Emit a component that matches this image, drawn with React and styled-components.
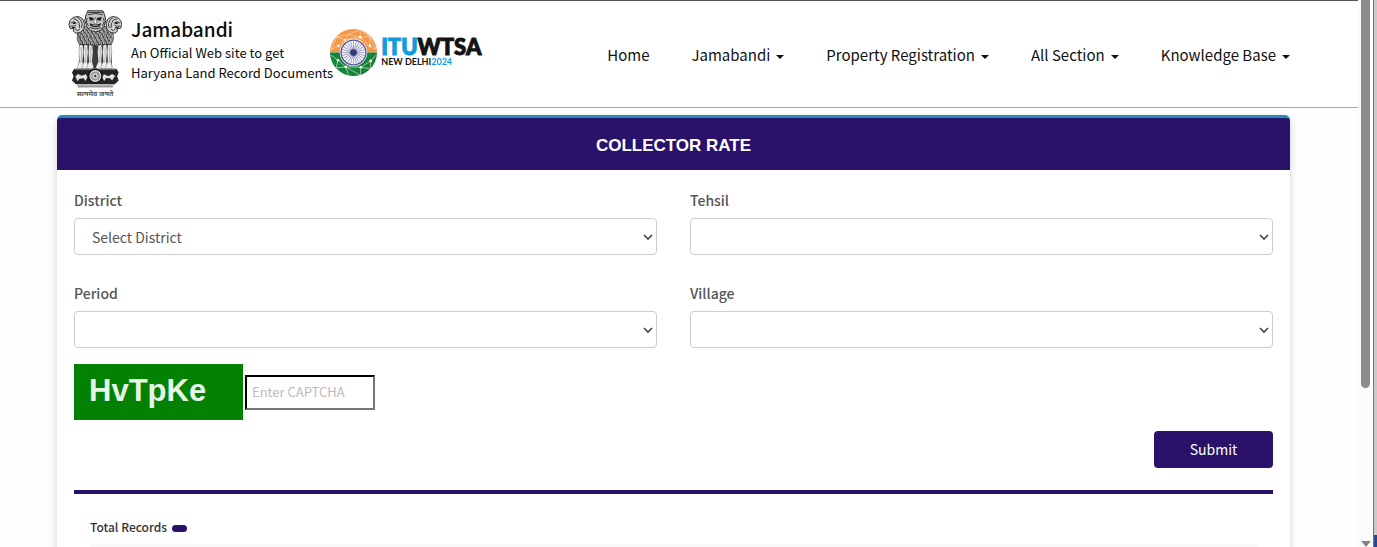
import React from "react";
import styled, { createGlobalStyle } from "styled-components";

const sans = `"Noto Sans CJK SC", "Noto Sans", sans-serif`;
const indigo = "#2a126b";

const GlobalStyle = createGlobalStyle`
  *, *::before, *::after { box-sizing: border-box; }
  body { margin: 0; background: #fefefe; color: #111; font-family: ${sans}; }
`;

const Shell = styled.div`
  display: flex;
  height: 100vh;
  overflow: hidden;
`;

const Page = styled.div`
  flex: 1;
  min-width: 0;
  overflow: hidden;
`;

const Header = styled.header`
  display: flex;
  align-items: center;
  height: 108px;
  padding: 0 68px;
  border-top: 1px solid #55585d;
  border-bottom: 1px solid #86aed6;
  background: #fff;
`;

const Brand = styled.a`
  display: flex;
  align-items: center;
  gap: 9px;
  color: #0c0c0c;
  text-decoration: none;
`;

const EmblemFigure = styled.span`
  display: flex;
  flex-direction: column;
  align-items: center;
  width: 54px;
`;

const Motto = styled.span`
  font: bold 7px/8px "Noto Sans", sans-serif;
  color: #555;
  white-space: nowrap;
`;

const BrandText = styled.span`
  display: flex;
  flex-direction: column;
  padding-bottom: 10px;
  font-size: 13px;
  line-height: 20px;
  white-space: nowrap;
`;

const BrandName = styled.strong`
  font-size: 19px;
  line-height: 28px;
  font-weight: 500;
`;

const EventLink = styled.a`
  display: flex;
  align-items: center;
  gap: 4px;
  margin-left: -3px;
  padding-bottom: 4px;
  color: #141414;
  text-decoration: none;
`;

const EventText = styled.span`
  display: flex;
  flex-direction: column;
  font-family: Lato, sans-serif;
  white-space: nowrap;
`;

const EventTitle = styled.span`
  font-size: 22px;
  line-height: 20px;
  font-weight: 900;
  -webkit-text-stroke: 1px currentColor;
`;

const EventPlace = styled.span`
  font-size: 9px;
  line-height: 10px;
  font-weight: 700;
`;

const Accent = styled.span`
  color: #0f9bdc;
`;

const Nav = styled.nav`
  display: flex;
  gap: 42px;
  margin-left: auto;
  padding-top: 2px;
`;

const NavLink = styled.a`
  display: flex;
  align-items: center;
  gap: 6px;
  color: #111;
  font-size: 15px;
  line-height: 22px;
  text-decoration: none;
  white-space: nowrap;
`;

const Caret = styled.span`
  margin-top: 4px;
  border: 4px solid transparent;
  border-top-color: #111;
  border-bottom: 0;
`;

const Card = styled.main`
  margin: 7px 68px 0 57px;
  min-height: 480px;
  border-radius: 5px;
  background: #fff;
  box-shadow: 0 4px 8px rgba(0, 0, 0, 0.18);
`;

const CardTitle = styled.h1`
  margin: 0;
  padding-top: 4px;
  border-top: 3px solid #2a8ab6;
  border-radius: 5px 5px 0 0;
  background: ${indigo};
  color: #fff;
  font: bold 17px/48px "Liberation Sans", Arial, sans-serif;
  text-align: center;
`;

const Form = styled.form`
  padding: 20px 17px 0;
`;

const Fields = styled.div`
  display: grid;
  grid-template-columns: 1fr 1fr;
  gap: 28px 33px;
`;

const Field = styled.div`
  display: flex;
  flex-direction: column;
  gap: 8px;
`;

const Label = styled.label`
  color: #555;
  font-size: 14px;
  line-height: 20px;
  font-weight: 500;
`;

const SelectBox = styled.div`
  display: grid;
  align-items: center;
  & > * { grid-area: 1 / 1; }
  & > svg { justify-self: end; margin-right: 4px; pointer-events: none; }
`;

const Select = styled.select`
  appearance: none;
  width: 100%;
  height: 37px;
  padding: 0 17px;
  border: 1px solid #ccc;
  border-radius: 4px;
  background: #fff;
  color: #555;
  font: 14px/20px ${sans};
`;

const CaptchaRow = styled.div`
  display: flex;
  align-items: center;
  gap: 2px;
  margin-top: 16px;
`;

const Captcha = styled.div`
  width: 169px;
  height: 56px;
  padding-left: 15px;
  background: #028102;
  color: #e6f5e6;
  font: bold 31px/53px "Liberation Sans", Arial, sans-serif;
`;

const CaptchaInput = styled.input`
  width: 130px;
  height: 35px;
  padding: 0 5px 2px;
  border: 2px inset #767676;
  border-color: #222 #767676 #767676 #222;
  background: #fff;
  color: #333;
  font: 13px/20px ${sans};
  &::placeholder { color: #bbb; opacity: 1; }
`;

const Actions = styled.div`
  display: flex;
  justify-content: flex-end;
  margin-top: 11px;
  padding-bottom: 22px;
  border-bottom: 4px solid ${indigo};
`;

const SubmitButton = styled.button`
  width: 119px;
  height: 37px;
  padding: 0 0 2px;
  border: 0;
  border-radius: 4px;
  background: ${indigo};
  color: #fff;
  font: 14px/20px ${sans};
`;

const Results = styled.section`
  padding: 23px 33px 0;
`;

const Total = styled.div`
  display: flex;
  align-items: center;
  gap: 5px;
  color: #333;
  font-size: 12px;
  line-height: 20px;
  font-weight: 500;
`;

const Badge = styled.span`
  width: 15px;
  height: 7px;
  margin-top: 3px;
  border-radius: 4px;
  background: ${indigo};
`;

const ResultsHead = styled.div`
  height: 30px;
  margin-top: 7px;
  background: #fafafa;
`;

const Rail = styled.div`
  display: flex;
  flex-direction: column;
  align-items: center;
  justify-content: space-between;
  width: 15px;
  background: #fbfbfb;
`;

const Thumb = styled.div`
  width: 9px;
  height: 71%;
  margin-bottom: auto;
  border-radius: 0 0 5px 5px;
  background: #8b8b8b;
`;

const RailArrow = styled.div`
  border: 5px solid transparent;
  border-top: 6px solid #858585;
  border-bottom: 0;
`;

const WindowEdge = styled.div`
  display: flex;
  align-items: flex-end;
  width: 4px;
  border-left: 1px solid #777;
  background: #c9c9c9;
`;

const EdgeMark = styled.div`
  width: 3px;
  height: 12px;
  background: #24488a;
`;

const manes = [
  [56, 84], [66, 80], [78, 80], [90, 82], [102, 82], [114, 80], [126, 78], [138, 82],
  [52, 94], [63, 92], [74, 92], [86, 94], [99, 95], [112, 94], [124, 92], [136, 94], [146, 94],
  [57, 105], [69, 104], [81, 106], [93, 107], [105, 107], [117, 105], [129, 104], [141, 106],
  [63, 116], [76, 117], [88, 119], [100, 120], [112, 118], [124, 117], [136, 116],
];

const legs = [52, 66, 81, 109, 124, 138];

function SideHead() {
  return (
    <g>
      <path d="M20 60 23 47l10-9 15-3 13 7 6 14-2 17-10 10-14 3-8-6 1-8-11-1Z" fill="#d2d2d2" stroke="#333" strokeWidth="3" strokeLinejoin="round" />
      <path d="m25 55 10-4 8 5M24 64l12 1 6-4M33 42l12 4 6 10 1 14M45 38l10 7 5 12-2 13M38 72l7 6 8-4" fill="none" stroke="#3a3a3a" strokeWidth="3" />
      <path d="m30 55 7-3 4 5-7 2Z" fill="#181818" />
      <path d="m28 67 12 0-2 5-8-1Z" fill="#333" />
    </g>
  );
}

function Emblem() {
  return (
    <svg width="54" height="80" viewBox="17 16 164 242" aria-hidden="true">
      <path d="M46 80 66 66h68l20 14 1 26-8 18-18 10H71l-18-10-8-18Z" fill="#8c8c8c" stroke="#333" strokeWidth="2" />
      <path d="M53 118h94l4 76H49Z" fill="#3c3c3c" />
      {legs.map((x) => (
        <g key={x}>
          <path d={`M${x} 122h10l2 22-3 28 5 18-6 5H${x - 5}l-2-6 7-17-2-28Z`} fill="#efefef" stroke="#333" strokeWidth="1" />
          <path d={`M${x + 5} 128l1 24-2 24`} fill="none" stroke="#8a8a8a" strokeWidth="2" />
        </g>
      ))}
      <g fill="none" stroke="#2b2b2b" strokeWidth="3">
        {manes.map(([x, y]) => <path key={`${x}-${y}`} d={`m${x - 4} ${y - 5} 5 10 4-9`} />)}
      </g>
      <g fill="none" stroke="#e6e6e6" strokeWidth="2">
        {manes.map(([x, y]) => <path key={`${x}-${y}`} d={`m${x + 5} ${y - 4} 1 8m-5-7 0 5`} />)}
      </g>
      <SideHead />
      <g transform="translate(200 0) scale(-1 1)">
        <SideHead />
      </g>
      <path d="M72 30 77 18h46l5 12 4 18-6 18-11 12-15 4-15-4-11-12-6-18Z" fill="#c4c4c4" stroke="#2a2a2a" strokeWidth="3" strokeLinejoin="round" />
      <path d="M78 23h44M77 30q23-8 46 0M75 40l-2 12 6 12m46-24 2 12-6 12M82 69q18 8 36 0" fill="none" stroke="#3a3a3a" strokeWidth="3" />
      <path d="m80 37 14 2 1 7-11 2Zm40 0-14 2-1 7 11 2Z" fill="#1d1d1d" />
      <path d="m100 38 6 15-6 4-6-4Z" fill="#f4f4f4" stroke="#444" strokeWidth="2" />
      <path d="M82 56q18 7 36 0l-4 9q-14 6-28 0Z" fill="#262626" />
      <path d="M91 62h18" stroke="#ddd" strokeWidth="2" />
      <path d="M36 194h128l7 11-5 12 5 13-12 11H41L29 230l5-13-5-12Z" fill="#262626" />
      <path d="M38 195h124" stroke="#999" strokeWidth="3" />
      <path d="m39 218 8-8 12 5 12-4 5 9-6 11-5-8-13 1-6 8-4-9Zm122-2-10-6-11 7-14-6-5 9 6 11 6-9 12 1 6 7 5-9Z" fill="#e2e2e2" />
      <circle cx="100" cy="216" r="20" fill="#e4e4e4" stroke="#111" strokeWidth="4" />
      <circle cx="100" cy="216" r="12" fill="#c4c4c4" stroke="#666" strokeWidth="5" strokeDasharray="2 2" />
      <circle cx="100" cy="216" r="3" fill="#222" />
      <path d="M44 241h112l-3 9H47Z" fill="#b0b0b0" />
      <path d="M47 249h106" stroke="#777" strokeWidth="2" />
    </svg>
  );
}

function ChakraGlobe() {
  const spokes = Array.from({ length: 24 }, (_, i) => i * 15);
  return (
    <svg width="47" height="47" viewBox="0 0 140 140" aria-hidden="true">
      <path d="M0 70a70 70 0 0 1 140 0Z" fill="#f79646" />
      <path d="M0 70a70 70 0 0 0 140 0Z" fill="#11843d" />
      <g fill="none" stroke="#f8dcc0" strokeWidth="2">
        <path d="m3 62 17-38 35-8 35-14 27 20 20 38M20 24l25 8 45-7 27-3M3 62l22-12 20-18 10-16 35 9 29 26 17 11M90 2v23m27-3 2 29" />
        <path d="m3 78 21 15 23 20 45 1 29-19 16-17M18 116l29-3 43 25 2-24 29 5M24 93l-6 23m103-21v24M47 113l8 23" />
      </g>
      <g fill="#fff">
        <circle cx="25" cy="50" r="4" /><circle cx="45" cy="32" r="3" /><circle cx="90" cy="25" r="4" />
        <circle cx="119" cy="51" r="4" /><circle cx="24" cy="93" r="4" /><circle cx="47" cy="113" r="4" />
        <circle cx="92" cy="114" r="4" /><circle cx="121" cy="95" r="4" />
      </g>
      <circle cx="70" cy="70" r="41" fill="#fff" />
      <circle cx="70" cy="70" r="37" fill="#f4f4fa" stroke="#515293" strokeWidth="4" />
      <g stroke="#8485b4" strokeWidth="2">
        {spokes.map((a) => <path key={a} d="M70 70V35" transform={`rotate(${a} 70 70)`} />)}
      </g>
      <circle cx="70" cy="70" r="10" fill="#333878" />
    </svg>
  );
}

function SelectField({ id, label, placeholder }) {
  return (
    <Field>
      <Label htmlFor={id}>{label}</Label>
      <SelectBox>
        <Select id={id}>
          <option>{placeholder}</option>
        </Select>
        <svg width="10" height="8" viewBox="0 0 10 8" aria-hidden="true">
          <path d="m1 2 4 4 4-4" fill="none" stroke="#444" strokeWidth="1.6" />
        </svg>
      </SelectBox>
    </Field>
  );
}

const menu = [
  { label: "Home" },
  { label: "Jamabandi", sub: true },
  { label: "Property Registration", sub: true },
  { label: "All Section", sub: true },
  { label: "Knowledge Base", sub: true },
];

export default function App() {
  return (
    <>
      <GlobalStyle />
      <Shell>
        <Page>
          <Header>
            <Brand href="#home">
              <EmblemFigure>
                <Emblem />
                <Motto lang="hi">सत्यमेव जयते</Motto>
              </EmblemFigure>
              <BrandText>
                <BrandName>Jamabandi</BrandName>
                <span>An Official Web site to get</span>
                <span>Haryana Land Record Documents</span>
              </BrandText>
            </Brand>
            <EventLink href="#wtsa">
              <ChakraGlobe />
              <EventText>
                <EventTitle><Accent>ITU</Accent>WTSA</EventTitle>
                <EventPlace>NEW DELHI<Accent>2024</Accent></EventPlace>
              </EventText>
            </EventLink>
            <Nav>
              {menu.map(({ label, sub }) => (
                <NavLink key={label} href="#menu">
                  {label}
                  {sub && <Caret />}
                </NavLink>
              ))}
            </Nav>
          </Header>
          <Card>
            <CardTitle>COLLECTOR RATE</CardTitle>
            <Form onSubmit={(e) => e.preventDefault()}>
              <Fields>
                <SelectField id="district" label="District" placeholder="Select District" />
                <SelectField id="tehsil" label="Tehsil" />
                <SelectField id="period" label="Period" />
                <SelectField id="village" label="Village" />
              </Fields>
              <CaptchaRow>
                <Captcha>HvTpKe</Captcha>
                <CaptchaInput aria-label="Enter CAPTCHA" placeholder="Enter CAPTCHA" />
              </CaptchaRow>
              <Actions>
                <SubmitButton type="submit">Submit</SubmitButton>
              </Actions>
            </Form>
            <Results>
              <Total>Total Records <Badge /></Total>
              <ResultsHead />
            </Results>
          </Card>
        </Page>
        <Rail>
          <Thumb />
          <RailArrow />
        </Rail>
        <WindowEdge>
          <EdgeMark />
        </WindowEdge>
      </Shell>
    </>
  );
}
